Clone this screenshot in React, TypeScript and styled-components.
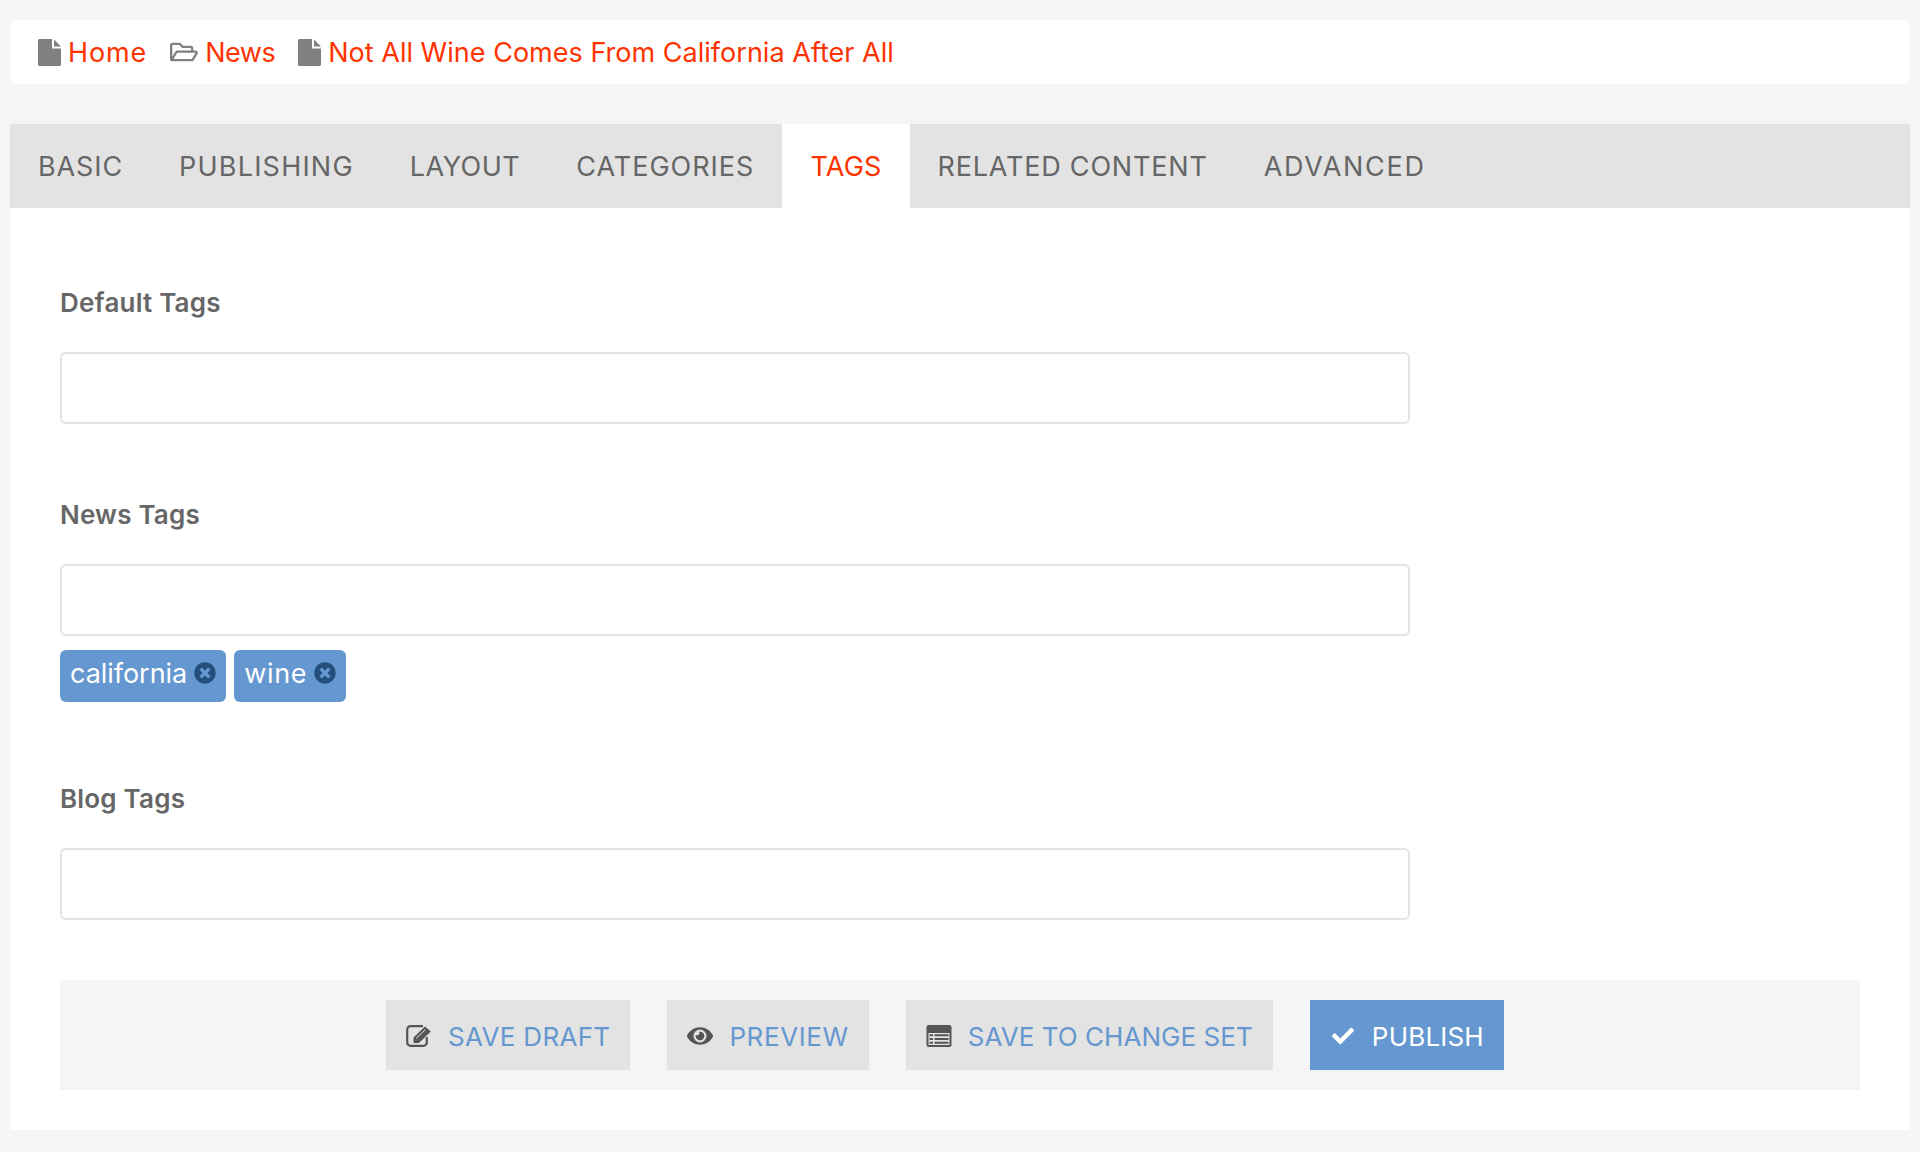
import React from "react";
import styled, { createGlobalStyle } from "styled-components";
import { FaRegFolderOpen, FaEye, FaCheck, FaTimesCircle } from "react-icons/fa";

const Global = createGlobalStyle`
  html, body { margin: 0; padding: 0; background: #f5f5f5; }
  * { box-sizing: border-box; }
  body { font-family: Inter, "Liberation Sans", sans-serif; color: #666; }
`;
const Page = styled.div`
  padding: 20px 10px 22px;
`;
const Breadcrumb = styled.nav`
  height: 64px;
  background: #fff;
  border-radius: 8px;
  display: flex;
  align-items: center;
  padding-left: 28px;
  gap: 23px;
  margin-bottom: 40px;
`;
const Crumb = styled.a<{ $tracking: number }>`
  display: flex;
  align-items: center;
  gap: 7px;
  color: #ff3300;
  font-size: 27px;
  letter-spacing: ${(p) => p.$tracking}px;
  svg { color: #808080; flex: none; }
`;
const Tabs = styled.div`
  display: flex;
  height: 84px;
  background: #e3e3e3;
`;
const Tab = styled.div<{ $active?: boolean; $tracking: number }>`
  display: flex;
  align-items: center;
  padding: 0 28px;
  font-size: 27px;
  letter-spacing: ${(p) => p.$tracking}px;
  color: ${(p) => (p.$active ? "#ff3300" : "#666")};
  background: ${(p) => (p.$active ? "#fff" : "transparent")};
`;
const Card = styled.div`
  background: #fff;
  padding: 80px 50px 40px;
`;
const Field = styled.div<{ $after: number }>`
  width: 1350px;
  margin-bottom: ${(p) => p.$after}px;
`;
const Label = styled.div`
  height: 30px;
  line-height: 30px;
  font-size: 26px;
  font-weight: 600;
  letter-spacing: 0.2px;
  color: #666;
  margin-bottom: 34px;
`;
const Input = styled.input`
  display: block;
  width: 100%;
  height: 72px;
  border: 2px solid #e3e3e3;
  border-radius: 6px;
  background: #fff;
  outline: none;
`;
const Chips = styled.div`
  display: flex;
  gap: 8px;
  margin-top: 14px;
`;
const Chip = styled.span<{ $tracking: number }>`
  display: flex;
  align-items: center;
  gap: 7px;
  height: 52px;
  padding: 0 10px 6px;
  background: #6597d0;
  color: #fff;
  border-radius: 6px;
  font-size: 27px;
  letter-spacing: ${(p) => p.$tracking}px;
  svg { color: #234f7d; font-size: 22px; }
`;
const Actions = styled.div`
  display: flex;
  justify-content: center;
  gap: 37px;
  padding: 20px 30px 20px 0;
  background: #f5f5f5;
`;
const Action = styled.button<{ $primary?: boolean; $tracking: number }>`
  display: flex;
  align-items: center;
  gap: 16px;
  height: 70px;
  padding: 2px 20px 0;
  border: 0;
  font: inherit;
  font-size: 26px;
  letter-spacing: ${(p) => p.$tracking}px;
  background: ${(p) => (p.$primary ? "#6597d0" : "#e3e3e3")};
  color: ${(p) => (p.$primary ? "#fff" : "#6597d0")};
`;
const ActionIcon = styled.span<{ $primary?: boolean }>`
  display: flex;
  justify-content: center;
  width: 26px;
  color: ${(p) => (p.$primary ? "#fff" : "#555")};
`;

const FileIcon = () => (
  <svg width="23" height="27" viewBox="0 0 23 27" fill="currentColor">
    <path d="M1.5 0H14V9.5H23V25.5A1.5 1.5 0 0 1 21.5 27H1.5A1.5 1.5 0 0 1 0 25.5V1.5A1.5 1.5 0 0 1 1.5 0Z" />
    <path d="M16 0.5L23 7.5H16Z" />
  </svg>
);
const EditIcon = () => (
  <svg width="26" height="22" viewBox="0 0 26 22" fill="none" stroke="currentColor">
    <path d="M17 1.2H4.5A3.3 3.3 0 0 0 1.2 4.5V17.5A3.3 3.3 0 0 0 4.5 20.8H17.5A3.3 3.3 0 0 0 20.8 17.5V12" strokeWidth="2.2" />
    <path d="M7.5 12.5L19 1.5L24.8 6.5L13 18H7.5Z" fill="currentColor" stroke="none" />
    <path d="M10 13.5L19.5 4.5" stroke="#e3e3e3" strokeWidth="1" />
  </svg>
);
const ListIcon = () => (
  <svg width="26" height="22" viewBox="0 0 26 22">
    <rect x="0.5" width="25" height="22" rx="2.5" fill="#555" />
    <rect x="2.5" y="8" width="21" height="12" fill="#e3e3e3" />
    <path d="M3.5 9.2H7V11.2H3.5ZM3.5 13H7V15H3.5ZM3.5 16.8H7V18.8H3.5ZM8.5 9.2H22.5V11.2H8.5ZM8.5 13H22.5V15H8.5ZM8.5 16.8H22.5V18.8H8.5Z" fill="#555" />
  </svg>
);

export default function App() {
  return (
    <Page>
      <Global />
      <Breadcrumb>
        <Crumb $tracking={0.9}><FileIcon />Home</Crumb>
        <Crumb $tracking={-0.5}><FaRegFolderOpen size={28} />News</Crumb>
        <Crumb $tracking={0.02}><FileIcon />Not All Wine Comes From California After All</Crumb>
      </Breadcrumb>
      <Tabs>
        <Tab $tracking={0.9}>BASIC</Tab>
        <Tab $tracking={1.2}>PUBLISHING</Tab>
        <Tab $tracking={0.5}>LAYOUT</Tab>
        <Tab $tracking={1.0}>CATEGORIES</Tab>
        <Tab $active $tracking={0.2}>TAGS</Tab>
        <Tab $tracking={0.8}>RELATED CONTENT</Tab>
        <Tab $tracking={1.7}>ADVANCED</Tab>
      </Tabs>
      <Card>
        <Field $after={76}>
          <Label>Default Tags</Label>
          <Input />
        </Field>
        <Field $after={82}>
          <Label>News Tags</Label>
          <Input />
          <Chips>
            <Chip $tracking={-0.04}>california<FaTimesCircle /></Chip>
            <Chip $tracking={0.7}>wine<FaTimesCircle /></Chip>
          </Chips>
        </Field>
        <Field $after={60}>
          <Label>Blog Tags</Label>
          <Input />
        </Field>
        <Actions>
          <Action $tracking={0.3}><ActionIcon><EditIcon /></ActionIcon>SAVE DRAFT</Action>
          <Action $tracking={0.6}><ActionIcon><FaEye size={26} /></ActionIcon>PREVIEW</Action>
          <Action $tracking={0.05}><ActionIcon><ListIcon /></ActionIcon>SAVE TO CHANGE SET</Action>
          <Action $primary $tracking={0.2}><ActionIcon $primary><FaCheck size={22} /></ActionIcon>PUBLISH</Action>
        </Actions>
      </Card>
    </Page>
  );
}
